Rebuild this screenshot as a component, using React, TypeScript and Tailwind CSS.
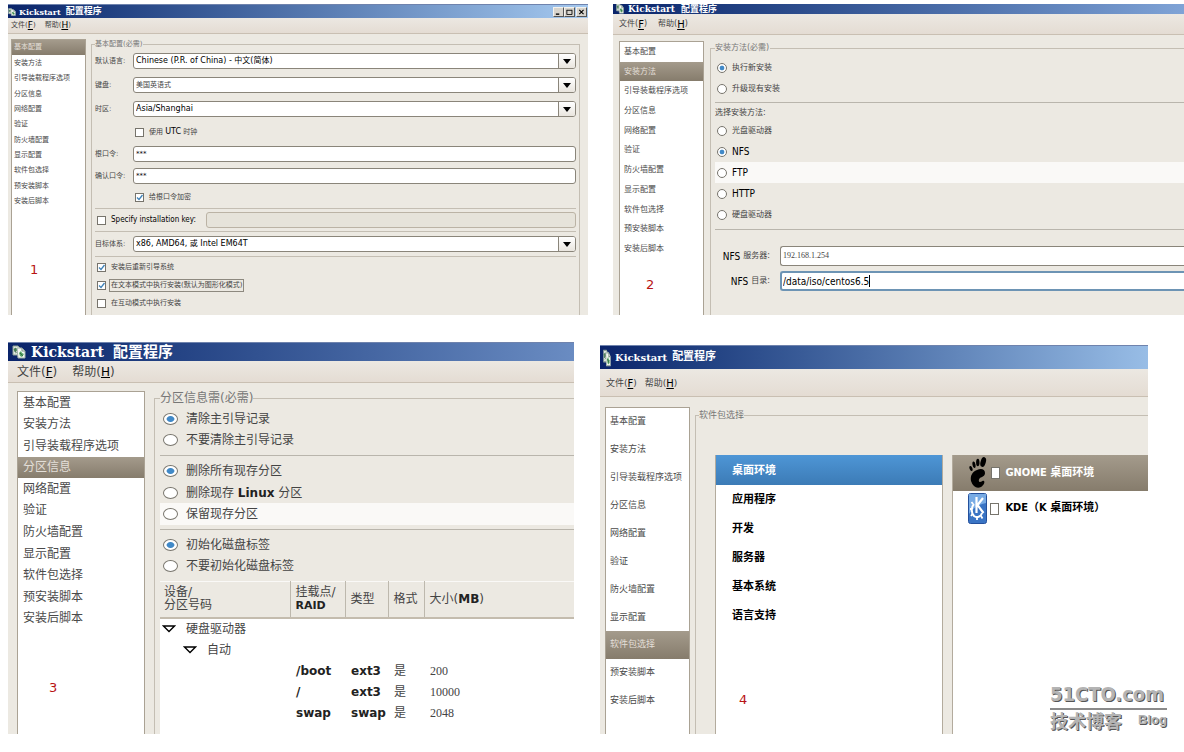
import type { ReactNode } from 'react';
import { clsx } from 'clsx';

const SECTIONS = [
  '基本配置',
  '安装方法',
  '引导装载程序选项',
  '分区信息',
  '网络配置',
  '验证',
  '防火墙配置',
  '显示配置',
  '软件包选择',
  '预安装脚本',
  '安装后脚本',
];

const PARTITIONS = [
  { mount: '/boot', type: 'ext3', size: '200' },
  { mount: '/', type: 'ext3', size: '10000' },
  { mount: 'swap', type: 'swap', size: '2048' },
];

const CATEGORIES = ['桌面环境', '应用程序', '开发', '服务器', '基本系统', '语言支持'];

function AppIcon({ className }: { className: string }) {
  return (
    <svg viewBox="0 0 14 14" preserveAspectRatio="none" className={clsx('shrink-0', className)}>
      <path d="M1 1h5l2 2v7H1z" fill="#dfe8df" stroke="#8fa398" />
      <path d="M2 4l2-1 1 2-2 2zM3 8l2-1" fill="#3c8a4c" stroke="#355a44" strokeWidth=".6" />
      <path d="M5 3h5l3 3v7H6z" fill="#f4f7f2" stroke="#9fb0a8" />
      <path d="M10 3v3h3" fill="none" stroke="#7d8f86" />
      <path d="M7 8l2-2 1 2 2 1-2 3-2-1z" fill="#55a564" />
      <path d="M8 8l3 3" stroke="#2f5a3a" strokeWidth=".8" />
    </svg>
  );
}

function TitleBar({ className, icon, latin, han, children }: {
  className: string;
  icon: string;
  latin: string;
  han: string;
  children?: ReactNode;
}) {
  return (
    <header className={clsx('flex shrink-0 overflow-hidden border-t border-[#6f83ad] bg-linear-to-r from-[#0a246a] text-white', className)}>
      <AppIcon className={icon} />
      <h2 className="flex items-center whitespace-nowrap font-bold">
        <span className={clsx("font-['DejaVu_Serif',serif]", latin)}>Kickstart</span>
        <span className={han}>配置程序</span>
      </h2>
      {children}
    </header>
  );
}

function MenuBar({ className, mnemonic }: { className: string; mnemonic: string }) {
  return (
    <nav className={clsx('flex shrink-0 items-center border-b border-[#c9bfb2] bg-linear-to-b from-[#ece8e2] to-[#e4dcd3] text-[#444]', className)}>
      <button type="button" className="flex items-center">
        文件(<u className={clsx('text-black', mnemonic)}>F</u>)
      </button>
      <button type="button" className="flex items-center">
        帮助(<u className={clsx('text-black', mnemonic)}>H</u>)
      </button>
    </nav>
  );
}

function Sidebar({ className, list, item, active, children }: {
  className: string;
  list: string;
  item: string;
  active: string;
  children?: ReactNode;
}) {
  return (
    <aside className={clsx('shrink-0 border border-b-0 border-[#aaa294] bg-white', className)}>
      <ul className={clsx('grid grid-rows-11', list)}>
        {SECTIONS.map((name) => (
          <li key={name} className="grid">
            <button
              type="button"
              className={clsx(
                'flex items-center whitespace-nowrap',
                item,
                name === active
                  ? 'bg-linear-to-b from-[#a49b8c] to-[#867c6c] text-[#e3dfd8]'
                  : 'text-[#4a4a4a]',
              )}
            >
              {name}
            </button>
          </li>
        ))}
      </ul>
      {children}
    </aside>
  );
}

function Step({ className, children }: { className: string; children: ReactNode }) {
  return <p className={clsx('text-[13px] leading-4 text-[#b81414]', className)}>{children}</p>;
}

function Check({ label, checked, focused, className }: {
  label: ReactNode;
  checked?: boolean;
  focused?: boolean;
  className?: string;
}) {
  return (
    <label className={clsx('flex items-center gap-[3px]', className)}>
      <span className="grid size-[9px] shrink-0">
        <input
          type="checkbox"
          defaultChecked={checked}
          className="peer size-[9px] appearance-none border border-[#77746c] bg-white [grid-area:1/1]"
        />
        <svg viewBox="0 0 9 9" className="pointer-events-none hidden size-[9px] [grid-area:1/1] peer-checked:block">
          <path d="M2 4.500l2 2L7.500 2" fill="none" stroke="#3f82b8" strokeWidth="1.3" />
        </svg>
      </span>
      <span className={clsx('border px-px leading-[11px]', focused ? 'border-[#8d897f]' : 'border-transparent')}>
        {label}
      </span>
    </label>
  );
}

function Radio({ group, label, checked, className, dot }: {
  group: string;
  label: ReactNode;
  checked?: boolean;
  className: string;
  dot: string;
}) {
  return (
    <label className={clsx('flex items-center', className)}>
      <input
        type="radio"
        name={group}
        defaultChecked={checked}
        className={clsx(
          'shrink-0 appearance-none rounded-[50%] border border-[#77746c] bg-white checked:bg-[radial-gradient(closest-side,#4189c7_50%,#ffffff_68%)]',
          dot,
        )}
      />
      <span className="whitespace-nowrap">{label}</span>
    </label>
  );
}

function Combo({ id, value, className }: { id: string; value: string; className: string }) {
  return (
    <div className="grid min-w-0 flex-1">
      <select
        id={id}
        className={clsx(
          'h-4 w-full appearance-none rounded-[3px] border border-[#8a857a] bg-white px-[2px] [grid-area:1/1]',
          className,
        )}
      >
        <option>{value}</option>
      </select>
      <span className="pointer-events-none my-px mr-px flex w-[17px] items-center justify-center justify-self-end rounded-r-[2px] border-l border-[#8a857a] bg-linear-to-b from-white to-[#e9e5de] [grid-area:1/1]">
        <svg viewBox="0 0 8 5" className="h-[5px] w-2">
          <path d="M0 0h8L4 5z" fill="#000" />
        </svg>
      </span>
    </div>
  );
}

function Field({ id, label, children, className }: {
  id: string;
  label: string;
  children: ReactNode;
  className: string;
}) {
  return (
    <div className={clsx('flex items-center', className)}>
      <label htmlFor={id} className="w-[38px] shrink-0">{label}</label>
      {children}
    </div>
  );
}

function BasicWindow() {
  const entry = 'h-4 min-w-0 flex-1 rounded-[3px] border border-[#8a857a] px-[2px] text-black';
  return (
    <section className="flex min-w-0 flex-[580] flex-col bg-[#ece9e2] text-[7px]">
      <TitleBar
        className="h-[14px] items-center gap-[3px] to-[#a6caf0] pr-px"
        icon="size-2"
        latin="mr-[5px] text-[8px]"
        han="text-[9px]"
      >
        <div className="ml-auto flex items-center">
          <button type="button" aria-label="Minimize" className="flex h-[10px] w-[11px] border border-[#f4f2ee] border-r-[#555] border-b-[#555] bg-[#d8d4cc] p-px">
            <svg viewBox="0 0 8 7"><path d="M1 6h4" stroke="#000" strokeWidth="1.6" /></svg>
          </button>
          <button type="button" aria-label="Maximize" className="mr-px flex h-[10px] w-[11px] border border-[#f4f2ee] border-r-[#555] border-b-[#555] bg-[#d8d4cc] p-px">
            <svg viewBox="0 0 8 7"><path d="M1 1.500h6M1 1v5.500h6V1" fill="none" stroke="#000" /></svg>
          </button>
          <button type="button" aria-label="Close" className="flex h-[10px] w-[11px] border border-[#f4f2ee] border-r-[#555] border-b-[#555] bg-[#d8d4cc] p-px">
            <svg viewBox="0 0 8 7"><path d="M1.500 1l5 5M6.500 1l-5 5" stroke="#000" strokeWidth="1.3" /></svg>
          </button>
        </div>
      </TitleBar>
      <MenuBar className="h-4 gap-[9px] px-[3px]" mnemonic="text-[9px]" />
      <div className="flex flex-1 gap-[5px] pt-[5px] pr-2 pl-[3px]">
        <Sidebar className="w-[75px]" list="h-[169px]" item="px-[2px]" active="基本配置">
          <Step className="pt-[53px] pl-[18px]">1</Step>
        </Sidebar>
        <fieldset className="min-w-0 flex-1 border border-b-0 border-[#c4beb3] px-[3px] text-[#444]">
          <legend className="pr-px leading-[10px] text-[#777]">基本配置(必需)</legend>
          <Field id="lang" label="默认语言:" className="h-6">
            <Combo id="lang" value="Chinese (P.R. of China) - 中文(简体)" className="text-[8px] text-black" />
          </Field>
          <Field id="keyboard" label="键盘:" className="h-6">
            <Combo id="keyboard" value="美国英语式" className="text-[7px] text-[#444]" />
          </Field>
          <Field id="timezone" label="时区:" className="h-6">
            <Combo id="timezone" value="Asia/Shanghai" className="text-[8px] text-black" />
          </Field>
          <Check className="h-[22px] pl-10" label={<>使用 <span className="text-[8px] text-black">UTC</span> 时钟</>} />
          <Field id="rootpw" label="根口令:" className="h-[22px]">
            <input id="rootpw" defaultValue="***" className={clsx(entry, 'bg-white')} />
          </Field>
          <Field id="confirm" label="确认口令:" className="h-[22px]">
            <input id="confirm" defaultValue="***" className={clsx(entry, 'bg-white')} />
          </Field>
          <Check className="h-[22px] border-b border-[#c4beb3] pl-10" label="给根口令加密" checked />
          <div className="flex h-[23px] items-center gap-2 border-b border-[#c4beb3] pl-[2px]">
            <Check label={<span className="font-['DejaVu_Sans_Condensed','DejaVu_Sans',sans-serif] text-[8px] text-black">Specify installation key:</span>} />
            <input aria-label="Installation key" disabled className="h-4 min-w-0 flex-1 rounded-[3px] border border-[#bbb3a5] bg-[#e6e3da]" />
          </div>
          <Field id="arch" label="目标体系:" className="h-[25px] border-b border-[#c4beb3]">
            <Combo id="arch" value="x86, AMD64, 或 Intel EM64T" className="text-[8px] text-black" />
          </Field>
          <div className="pt-px pb-[3px] pl-[2px]">
            <Check className="h-[18px]" label="安装后重新引导系统" checked />
            <Check className="h-[18px]" label="在文本模式中执行安装(默认为图形化模式)" checked focused />
            <Check className="h-[18px]" label="在互动模式中执行安装" />
          </div>
        </fieldset>
      </div>
    </section>
  );
}

function MethodWindow() {
  const latin = "font-['DejaVu_Sans_Condensed','DejaVu_Sans',sans-serif] text-[10px] text-black";
  const radio = 'h-[21px] gap-[5px] pl-[2px]';
  const dot = 'size-[10px]';
  return (
    <section className="flex min-w-0 flex-[571] flex-col bg-[#ece9e2] text-[8px]">
      <TitleBar
        className="h-[10px] items-end gap-1 border-t-0 to-[#7fa3d6] pl-[3px] leading-[10px]"
        icon="h-[11px] w-2"
        latin="mr-[6px] text-[9px]"
        han="text-[9px]"
      />
      <MenuBar className="h-[21px] gap-[11px] px-[6px]" mnemonic="text-[10px]" />
      <div className="flex flex-1 gap-[6px] pt-[6px] pl-[6px]">
        <Sidebar className="w-[85px]" list="h-[217px]" item="px-1" active="安装方法">
          <Step className="pt-[18px] pl-[26px]">2</Step>
        </Sidebar>
        <fieldset className="min-w-0 flex-1 border-t border-l border-[#c4beb3] pl-1 text-[#444]">
          <legend className="pr-px leading-[14px] text-[#777]">安装方法(必需)</legend>
          <div className="flex flex-col border-b border-[#b9b5ac] pt-[2px] pb-[3px]">
            <Radio group="mode" label="执行新安装" checked className={radio} dot={dot} />
            <Radio group="mode" label="升级现有安装" className={radio} dot={dot} />
          </div>
          <p className="pt-[3px] leading-[14px]">选择安装方法:</p>
          <div className="flex flex-col border-b border-[#b9b5ac] pb-1">
            <Radio group="source" label="光盘驱动器" className={radio} dot={dot} />
            <Radio group="source" label={<span className={latin}>NFS</span>} checked className={radio} dot={dot} />
            <Radio group="source" label={<span className={latin}>FTP</span>} className="h-[21px] gap-[5px] bg-[#faf9f7] pl-[2px]" dot={dot} />
            <Radio group="source" label={<span className={latin}>HTTP</span>} className={radio} dot={dot} />
            <Radio group="source" label="硬盘驱动器" className={radio} dot={dot} />
          </div>
          <div className="flex flex-col gap-[5px] pt-4 pb-[22px]">
            <div className="flex h-5 items-stretch gap-[10px]">
              <label htmlFor="nfs-server" className="flex w-[55px] items-center justify-end gap-[3px] whitespace-nowrap">
                <span className={latin}>NFS</span>服务器:
              </label>
              <input
                id="nfs-server"
                defaultValue="192.168.1.254"
                className="min-w-0 flex-1 rounded-l-[3px] border border-r-0 border-[#8a857a] bg-white px-[2px] font-['Liberation_Serif',serif] text-[#444]"
              />
            </div>
            <div className="flex h-5 items-stretch gap-[10px]">
              <label htmlFor="nfs-dir" className="flex w-[55px] items-center justify-end gap-[3px] whitespace-nowrap">
                <span className={latin}>NFS</span>目录:
              </label>
              <div className="flex min-w-0 flex-1 items-center rounded-l-[3px] border-2 border-r-0 border-[#6d94b4] bg-white px-px">
                <input id="nfs-dir" defaultValue="/data/iso/centos6.5" className={clsx('field-sizing-content', latin)} />
                <span className="h-3 w-px bg-black" />
              </div>
            </div>
          </div>
        </fieldset>
      </div>
    </section>
  );
}

function Expander() {
  return (
    <svg viewBox="0 0 14 8" className="h-2 w-[14px] shrink-0">
      <path d="M1.500 1h11L7 6.500z" fill="#fff" stroke="#000" strokeWidth="1.3" />
    </svg>
  );
}

function PartitionWindow() {
  const radio = 'h-[21px] gap-2 pl-[3px]';
  const dot = 'h-3 w-[15px]';
  const head = 'border-l border-[#bdb8ad] px-[5px] text-left font-normal leading-[13px]';
  return (
    <section className="flex min-w-0 flex-[566] flex-col bg-[#ece9e2] text-[12px]">
      <TitleBar
        className="h-[19px] items-center gap-[5px] to-[#6a8cc2] pl-1"
        icon="h-[14px] w-[14px]"
        latin="mr-[9px] text-[14px] leading-[18px]"
        han="text-[15px] leading-[18px]"
      />
      <MenuBar className="h-[22px] gap-[15px] px-[9px]" mnemonic="text-[12px]" />
      <div className="flex flex-1 gap-[9px] pt-2 pl-[9px]">
        <Sidebar className="w-32" list="h-[237px]" item="px-[5px]" active="分区信息">
          <Step className="pt-[51px] pl-[31px]">3</Step>
        </Sidebar>
        <fieldset className="flex min-w-0 flex-1 flex-col border-t border-l border-[#c4beb3] pl-[5px] text-[#444]">
          <legend className="leading-[14px] text-[#777]">分区信息需(必需)</legend>
          <div className="flex flex-col border-b border-[#b9b5ac] pt-[3px] pb-1">
            <Radio group="mbr" label="清除主引导记录" checked className={radio} dot={dot} />
            <Radio group="mbr" label="不要清除主引导记录" className="h-[22px] gap-2 pl-[3px]" dot={dot} />
          </div>
          <div className="flex flex-col border-b border-[#b9b5ac] py-1">
            <Radio group="parts" label="删除所有现存分区" checked className="h-[22px] gap-2 pl-[3px]" dot={dot} />
            <Radio
              group="parts"
              label={<>删除现存 <span className="font-bold text-[#222]">Linux</span> 分区</>}
              className={radio}
              dot={dot}
            />
            <Radio group="parts" label="保留现存分区" className="h-[22px] gap-2 bg-[#faf9f7] pl-[3px]" dot={dot} />
          </div>
          <div className="flex flex-col pt-1 pb-[5px]">
            <Radio group="label" label="初始化磁盘标签" checked className={radio} dot={dot} />
            <Radio group="label" label="不要初始化磁盘标签" className={radio} dot={dot} />
          </div>
          <div className="flex-1 bg-white pb-[10px]">
            <table className="w-full table-fixed border-collapse">
              <thead>
                <tr className="h-[36px] border-t border-b-2 border-t-[#faf9f7] border-b-[#c4bcae] bg-[#ece9e2]">
                  <th className="w-[130px] px-1 text-left font-normal leading-[13px]">设备/<br />分区号码</th>
                  <th className={clsx(head, 'w-[55px]')}>挂载点/<br /><span className="text-[11px] font-bold text-[#222]">RAID</span></th>
                  <th className={clsx(head, 'w-[43px]')}>类型</th>
                  <th className={clsx(head, 'w-9')}>格式</th>
                  <th className={head}>大小(<span className="font-bold text-[#222]">MB</span>)</th>
                </tr>
              </thead>
              <tbody>
                <tr className="h-[21px]">
                  <td colSpan={5}>
                    <button type="button" className="flex items-center gap-[10px] pl-[2px]"><Expander />硬盘驱动器</button>
                  </td>
                </tr>
                <tr className="h-[22px]">
                  <td colSpan={5}>
                    <button type="button" className="flex items-center gap-[10px] pl-[23px]"><Expander />自动</button>
                  </td>
                </tr>
                {PARTITIONS.map((p) => (
                  <tr key={p.mount} className="h-[21px]">
                    <td />
                    <td className="px-[6px] font-bold text-[#222]">{p.mount}</td>
                    <td className="px-[6px] font-bold text-[#222]">{p.type}</td>
                    <td className="px-[6px]">是</td>
                    <td className="px-[6px] font-['Liberation_Serif',serif]">{p.size}</td>
                  </tr>
                ))}
              </tbody>
            </table>
          </div>
        </fieldset>
      </div>
    </section>
  );
}

function GnomeFoot() {
  return (
    <svg viewBox="0 0 18 32" className="h-8 w-[18px] shrink-0">
      <ellipse cx="14.200" cy="5" rx="2.600" ry="5" transform="rotate(16 14.200 5)" />
      <ellipse cx="8.800" cy="5.500" rx="1.700" ry="3.800" />
      <ellipse cx="5" cy="7.800" rx="1.500" ry="3.300" transform="rotate(-10 5 7.800)" />
      <ellipse cx="2" cy="11.500" rx="1.400" ry="2.700" transform="rotate(-20 2 11.500)" />
      <path d="M8 13c4-2 8-1 8 3 0 3-3 4-5 5-2 2-1 4 0 4 2 0 2-2 4-1 1 1 0 4-3 6-4 2-8 0-10-6-1-5 1-9 6-11z" />
    </svg>
  );
}

function KdeLogo() {
  return (
    <svg viewBox="0 0 19 31" className="h-[31px] w-[19px] shrink-0">
      <rect x=".5" y=".5" width="18" height="30" rx="2" fill="#3a74c4" stroke="#24509c" />
      <path d="M1 1h17v9C11 11 5 15 1 21z" fill="#78abe4" />
      <path d="M6 11c-3 3-3 9 0 12 3 2 7 1 8-3" fill="none" stroke="#fff" strokeWidth="2" />
      <path d="M5 11L3.500 9M4 16H2M4.500 21L3 23M9 24v3M13 23l1.500 2.500" stroke="#fff" strokeWidth="1.800" />
      <path d="M8.500 4v16M15 5l-5.500 7 6 8" fill="none" stroke="#fff" strokeWidth="2.200" />
    </svg>
  );
}

function PackageWindow() {
  const box = 'h-3 w-[9px] shrink-0 appearance-none border border-[#77746c] bg-white checked:bg-[#555]';
  const name = "font-['DejaVu_Sans_Condensed','DejaVu_Sans','Noto_Sans_CJK_SC',sans-serif] text-[11px] whitespace-nowrap";
  return (
    <section className="mt-[3px] flex min-w-0 flex-[548] flex-col bg-[#ece9e2] text-[9px]">
      <TitleBar
        className="h-6 items-center gap-1 to-[#98bde6] pl-[3px]"
        icon="h-[18px] w-2"
        latin="mr-[5px] text-[10px]"
        han="text-[11px]"
      />
      <MenuBar className="h-7 gap-2 px-[6px] pt-[2px]" mnemonic="text-[10px]" />
      <div className="flex flex-1 gap-[5px] pt-[10px] pl-[5px]">
        <Sidebar className="w-[85px]" list="h-[307px]" item="px-1" active="软件包选择" />
        <fieldset className="flex min-w-0 flex-1 flex-col border-t border-l border-[#c4beb3] pl-[3px]">
          <legend className="leading-4 text-[#777]">软件包选择</legend>
          <div className="flex flex-1 gap-[9px] pt-8 pl-4">
            <div className="min-w-0 flex-[228] border-x border-[#b3ab9d] bg-white">
              <ul>
                {CATEGORIES.map((category, i) => (
                  <li key={category} className={clsx('grid', i === 0 ? 'h-[30px]' : 'h-[29px]')}>
                    <button
                      type="button"
                      className={clsx(
                        'px-4 pt-[2px] text-left text-[11px] font-bold',
                        i === 0 ? 'bg-linear-to-b from-[#4e96d6] to-[#3c7bb6] text-white' : 'text-black',
                      )}
                    >
                      {category}
                    </button>
                  </li>
                ))}
              </ul>
              <Step className="pt-[62px] pl-[23px]">4</Step>
            </div>
            <div className="min-w-0 flex-[196] border-l border-[#b3ab9d] bg-white font-bold">
              <label className="flex h-9 items-center gap-1 bg-linear-to-b from-[#a49b8c] to-[#867c6c] pl-4 text-white">
                <GnomeFoot />
                <input type="checkbox" className={box} />
                <span className={clsx('pl-px', name)}>GNOME 桌面环境</span>
              </label>
              <label className="flex h-[35px] items-center gap-[3px] pl-[15px] text-black">
                <KdeLogo />
                <input type="checkbox" className={box} />
                <span className={clsx('pl-[3px]', name)}>KDE（K 桌面环境）</span>
              </label>
            </div>
          </div>
        </fieldset>
      </div>
    </section>
  );
}

function Watermark() {
  return (
    <div className="absolute right-[17px] bottom-0 w-[117px] font-bold whitespace-nowrap text-[#b4b4b4] [text-shadow:1px_1px_0_#555]">
      <p className="border-b-2 border-[#8a8a8a] font-['DejaVu_Sans_Condensed',sans-serif] text-[20px] leading-7">51CTO.com</p>
      <div className="flex items-start justify-between">
        <span className="text-[18px] leading-6">技术博客</span>
        <span className="font-['Liberation_Sans',sans-serif] text-[13px] leading-5">Blog</span>
      </div>
    </div>
  );
}

export default function App() {
  return (
    <main className="flex min-h-screen flex-col gap-[27px] bg-white pt-1 pb-4 font-['DejaVu_Sans','Noto_Sans_CJK_SC',sans-serif]">
      <div className="flex gap-[25px] pl-2">
        <BasicWindow />
        <MethodWindow />
      </div>
      <div className="relative flex gap-[26px] pr-9 pl-2">
        <PartitionWindow />
        <PackageWindow />
        <Watermark />
      </div>
    </main>
  );
}
